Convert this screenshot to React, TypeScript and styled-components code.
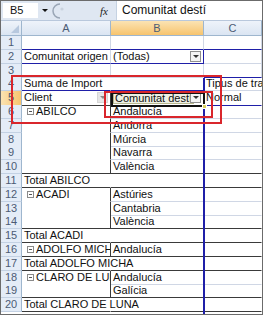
import styled, { createGlobalStyle, css } from "styled-components";

const GlobalStyle = createGlobalStyle`
  html, body {
    margin: 0;
    padding: 0;
    background: #ffffff;
  }
  * {
    box-sizing: border-box;
  }
`;

const LIGHT = "#d0d7e5";
const DARK = "#3a3a3a";
const BLUE = "#1f1fa8";
const RED = "#d9262c";
const COLS = "21px 89px 93px 1fr";

const Frame = styled.div`
  position: relative;
  width: 263px;
  height: 315px;
  border: 1px solid #6b6b6b;
  overflow: hidden;
  font-family: "Liberation Sans", Arial, sans-serif;
  background: #fff;
`;

const FormulaBar = styled.div`
  display: flex;
  align-items: center;
  height: 20px;
  background: #dfe7f2;
  border-bottom: 1px solid #b9c8dc;
`;

const NameBox = styled.div`
  width: 35px;
  height: 15px;
  margin-left: 2px;
  background: #fff;
  font-size: 11px;
  line-height: 15px;
  padding-left: 7px;
  color: #111;
`;

const Arrow = styled.div`
  width: 0;
  height: 0;
  margin-left: 4px;
  border-left: 3px solid transparent;
  border-right: 3px solid transparent;
  border-top: 3px solid #111;
`;

const Grip = styled.svg`
  margin-left: 3px;
  flex: none;
`;

const Fx = styled.div`
  margin-left: auto;
  width: 16px;
  font-family: "Liberation Serif", serif;
  font-style: italic;
  font-size: 11px;
  color: #222;
`;

const Input = styled.div`
  width: 146px;
  height: 19px;
  background: #fff;
  border-left: 1px solid #c5d2e2;
  font-size: 12px;
  line-height: 19px;
  padding-left: 5px;
  color: #111;
`;

const HeaderRow = styled.div`
  display: grid;
  grid-template-columns: ${COLS};
  height: 15px;
`;

const ColHead = styled.div<{ $active?: boolean }>`
  font-size: 11px;
  line-height: 14px;
  text-align: center;
  color: #4c5b74;
  border-right: 1px solid #9eb6ce;
  border-bottom: 1px solid #9eb6ce;
  background: ${(p) =>
    p.$active
      ? "linear-gradient(#fbe3b3, #f7c46e)"
      : "linear-gradient(#eef3fa, #dbe5f2)"};
`;

const Corner = styled(ColHead)`
  position: relative;
  &::after {
    content: "";
    position: absolute;
    right: 2px;
    bottom: 2px;
    border-left: 8px solid transparent;
    border-bottom: 8px solid #b7c8de;
  }
`;

const Row = styled.div`
  display: grid;
  grid-template-columns: ${COLS};
  height: 13.8px;
`;

const RowHead = styled.div<{ $active?: boolean }>`
  font-size: 11px;
  line-height: 13px;
  text-align: center;
  color: #4c5b74;
  border-right: 1px solid #9eb6ce;
  border-bottom: 1px solid #c3d1e3;
  background: ${(p) =>
    p.$active ? "linear-gradient(90deg, #fbe3b3, #f7c46e)" : "#e4ecf7"};
`;

type Line = "none" | "light" | "dark" | "blue";

const lineColor = (l: Line) =>
  l === "none" ? "transparent" : l === "dark" ? DARK : l === "blue" ? BLUE : LIGHT;

const Cell = styled.div<{ $r: Line; $b: Line; $t?: Line }>`
  position: relative;
  font-size: 11px;
  line-height: 13px;
  padding-left: 2px;
  white-space: nowrap;
  overflow: visible;
  color: #111;
  border-right: 1px solid ${(p) => lineColor(p.$r)};
  border-bottom: 1px solid ${(p) => lineColor(p.$b)};
  ${(p) =>
    p.$t &&
    css`
      border-top: 1px solid ${lineColor(p.$t)};
      line-height: 12px;
    `}
`;

const Clip = styled.span`
  display: block;
  overflow: hidden;
`;

const Minus = styled.span`
  display: inline-block;
  width: 7px;
  height: 7px;
  margin: 0 2px 0 3px;
  border: 1px solid #8a8a8a;
  position: relative;
  vertical-align: 0;
  &::after {
    content: "";
    position: absolute;
    left: 1px;
    right: 1px;
    top: 2px;
    height: 1px;
    background: #555;
  }
`;

const DropButton = styled.span<{ $boxed?: boolean }>`
  position: absolute;
  right: 2px;
  top: 1px;
  width: 11px;
  height: 11px;
  background: ${(p) => (p.$boxed ? "#f4f4f4" : "#e6e6e6")};
  border: 1px solid ${(p) => (p.$boxed ? "#8f8f8f" : "#d6d6d6")};
  &::after {
    content: "";
    position: absolute;
    left: 2px;
    top: 3px;
    border-left: 3px solid transparent;
    border-right: 3px solid transparent;
    border-top: 3px solid ${(p) => (p.$boxed ? "#333" : "#8a8a8a")};
  }
`;

const FieldBox = styled.span`
  display: inline-block;
  background: #eef0e4;
  border: 1px solid #b8b890;
  line-height: 10px;
  padding: 0 1px;
  margin-top: 1px;
`;

const Selected = styled.div`
  position: absolute;
  left: 110px;
  top: 91px;
  width: 94px;
  height: 15px;
  border: 2px solid #111;
  pointer-events: none;
`;

const Handle = styled.div`
  position: absolute;
  left: 201px;
  top: 103px;
  width: 5px;
  height: 5px;
  background: #d8d060;
  border: 1px solid #fff;
`;

const BlueLine = styled.div`
  position: absolute;
  left: 202px;
  top: 77px;
  width: 2px;
  bottom: 0;
  background: ${BLUE};
`;

const RedBox = styled.div`
  position: absolute;
  border: 2px solid ${RED};
  pointer-events: none;
`;

type Kind = "plain" | "item" | "last" | "total";

interface RowData {
  n: number;
  kind: Kind;
  a?: string;
  group?: boolean;
  b?: string;
}

const rows: RowData[] = [
  { n: 6, kind: "item", a: "ABILCO", group: true, b: "Andalucía" },
  { n: 7, kind: "item", b: "Andorra" },
  { n: 8, kind: "item", b: "Múrcia" },
  { n: 9, kind: "item", b: "Navarra" },
  { n: 10, kind: "last", b: "València" },
  { n: 11, kind: "total", a: "Total ABILCO" },
  { n: 12, kind: "item", a: "ACADI", group: true, b: "Astúries" },
  { n: 13, kind: "item", b: "Cantabria" },
  { n: 14, kind: "last", b: "València" },
  { n: 15, kind: "total", a: "Total ACADI" },
  { n: 16, kind: "last", a: "ADOLFO MICHA", group: true, b: "Andalucía" },
  { n: 17, kind: "total", a: "Total ADOLFO MICHA" },
  { n: 18, kind: "item", a: "CLARO DE LUNA", group: true, b: "Andalucía" },
  { n: 19, kind: "last", b: "Galícia" },
  { n: 20, kind: "total", a: "Total CLARO DE LUNA" },
];

const PivotRow = ({ r }: { r: RowData }) => {
  const bottom: Line = r.kind === "item" ? "light" : "dark";
  const aBottom: Line = r.kind === "item" ? "none" : "dark";
  const total = r.kind === "total";
  return (
    <Row>
      <RowHead>{r.n}</RowHead>
      <Cell $r={total ? "none" : "dark"} $b={aBottom}>
        {r.group ? (
          <Clip>
            <Minus />
            {r.a}
          </Clip>
        ) : (
          r.a
        )}
      </Cell>
      <Cell $r="none" $b={bottom}>
        {r.b}
      </Cell>
      <Cell $r="none" $b={bottom} />
    </Row>
  );
};

const App = () => {
  return (
    <>
      <GlobalStyle />
      <Frame>
        <FormulaBar>
          <NameBox>B5</NameBox>
          <Arrow />
          <Grip width="16" height="16" viewBox="0 0 16 16">
            <path d="M9 1 A7 7 0 0 0 9 15" fill="none" stroke="#9aa6b6" strokeWidth="1.5" />
            <circle cx="11" cy="6" r="1.6" fill="#c9d2de" />
          </Grip>
          <Fx>fx</Fx>
          <Input>Comunitat destí</Input>
        </FormulaBar>

        <HeaderRow>
          <Corner />
          <ColHead>A</ColHead>
          <ColHead $active>B</ColHead>
          <ColHead>C</ColHead>
        </HeaderRow>

        <Row>
          <RowHead>1</RowHead>
          <Cell $r="light" $b="blue" />
          <Cell $r="light" $b="blue" />
          <Cell $r="light" $b="blue" />
        </Row>
        <Row>
          <RowHead>2</RowHead>
          <Cell $r="light" $b="blue">Comunitat origen</Cell>
          <Cell $r="blue" $b="blue">
            (Todas)
            <DropButton $boxed />
          </Cell>
          <Cell $r="light" $b="light" />
        </Row>
        <Row>
          <RowHead>3</RowHead>
          <Cell $r="light" $b="light" />
          <Cell $r="light" $b="light" />
          <Cell $r="light" $b="blue" />
        </Row>
        <Row>
          <RowHead>4</RowHead>
          <Cell $r="none" $b="blue">Suma de Import</Cell>
          <Cell $r="none" $b="blue" />
          <Cell $r="none" $b="light">Tipus de tra</Cell>
        </Row>
        <Row>
          <RowHead $active>5</RowHead>
          <Cell $r="dark" $b="dark">
            Client
            <DropButton />
          </Cell>
          <Cell $r="none" $b="dark">
            <FieldBox>Comunitat destí</FieldBox>
            <DropButton $boxed />
          </Cell>
          <Cell $r="none" $b="blue">Normal</Cell>
        </Row>
        {rows.map((r) => (
          <PivotRow key={r.n} r={r} />
        ))}

        <BlueLine />
        <Selected />
        <Handle />
        <RedBox style={{ left: 10, top: 74, width: 211, height: 49 }} />
        <RedBox style={{ left: 103, top: 90, width: 109, height: 27 }} />
      </Frame>
    </>
  );
};

export default App;
